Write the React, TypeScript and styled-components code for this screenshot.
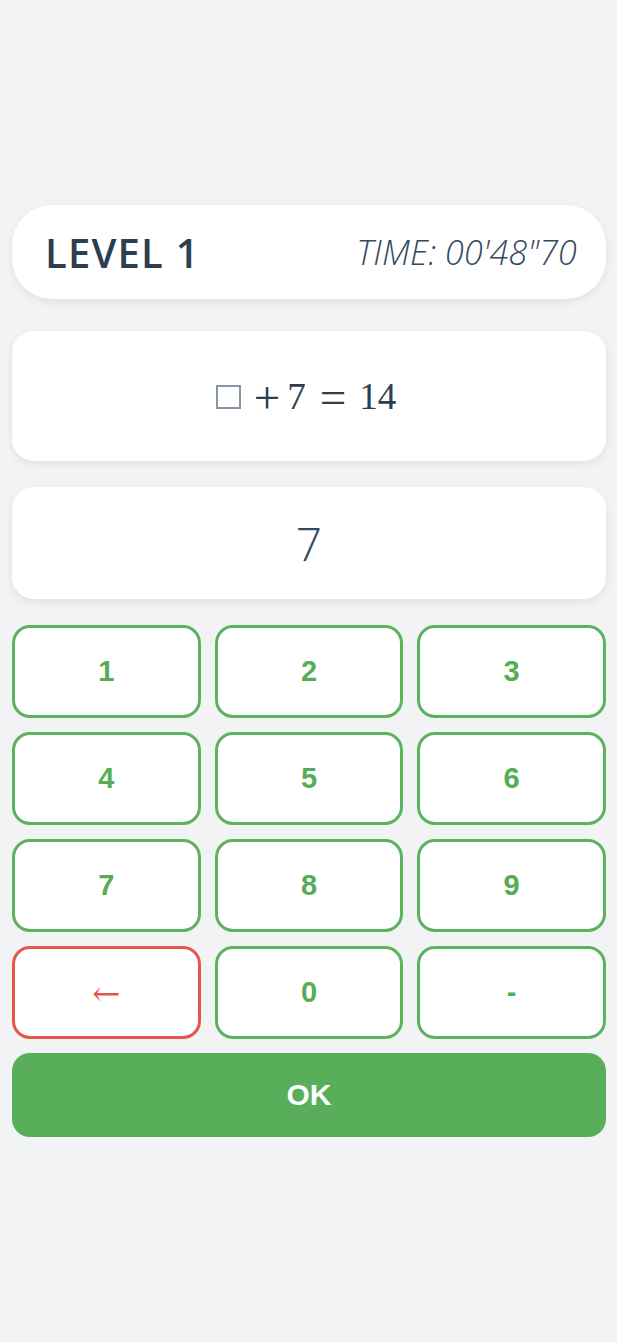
import React from "react";
import styled, { createGlobalStyle } from "styled-components";

const GlobalStyle = createGlobalStyle`
  html, body { margin: 0; padding: 0; background: #f2f3f5; }
  * { box-sizing: border-box; }
`;

const Page = styled.div`
  min-height: 1342px;
  display: flex;
  flex-direction: column;
  justify-content: center;
  padding: 0 11px 0 12px;
  background: #f2f3f5;
`;

const Header = styled.div`
  height: 94px;
  background: #fff;
  border-radius: 40px;
  box-shadow: 0 3px 8px rgba(0, 0, 0, 0.08);
  display: flex;
  align-items: center;
  justify-content: space-between;
  padding: 0 29px 0 33px;
  margin-bottom: 32px;
`;

const Level = styled.div`
  font-family: "Open Sans", sans-serif;
  font-weight: 600;
  font-size: 40px;
  letter-spacing: 1.2px;
  color: #2c3e50;
`;

const Time = styled.div`
  font-family: "Open Sans", sans-serif;
  font-style: italic;
  font-weight: 300;
  font-size: 34px;
  letter-spacing: 0.2px;
  color: #34495e;
`;

const Card = styled.div<{ $h: number; $mb: number }>`
  height: ${(p) => p.$h}px;
  margin-bottom: ${(p) => p.$mb}px;
  background: #fff;
  border-radius: 22px;
  box-shadow: 0 3px 8px rgba(0, 0, 0, 0.08);
  display: flex;
  align-items: center;
  justify-content: center;
`;

const Equation = styled.div`
  font-family: "Liberation Serif", serif;
  font-size: 37px;
  line-height: 1;
  color: #2c3e50;
  display: flex;
  align-items: center;
  padding-right: 6px;
`;

const Blank = styled.span`
  display: inline-block;
  width: 25px;
  height: 24px;
  border: 2px solid #8795a5;
  margin: 2px 13px 0 0;
`;

const Op = styled.span<{ $ml: number; $mr: number }>`
  font-size: 47px;
  line-height: 1;
  margin: 0 ${(p) => p.$mr}px 0 ${(p) => p.$ml}px;
  position: relative;
  top: 1px;
`;

const Answer = styled.div`
  font-family: "Open Sans", sans-serif;
  font-weight: 300;
  font-size: 46px;
  color: #34495e;
`;

const Keypad = styled.div`
  display: grid;
  grid-template-columns: repeat(3, 1fr);
  grid-auto-rows: 93px;
  column-gap: 14px;
  row-gap: 14px;
  margin-bottom: 14px;
`;

const Key = styled.button<{ $danger?: boolean }>`
  background: #fff;
  border: 3px solid ${(p) => (p.$danger ? "#e5574a" : "#5cb35c")};
  border-radius: 18px;
  color: ${(p) => (p.$danger ? "#e5574a" : "#55ad55")};
  font-family: "Liberation Sans", Arial, sans-serif;
  font-weight: 700;
  font-size: 29px;
  display: flex;
  align-items: center;
  justify-content: center;
  padding: 0;
`;

const Arrow = styled.span`
  font-family: "DejaVu Serif", "Liberation Serif", serif;
  font-weight: 400;
  font-size: 34px;
`;

const OkButton = styled.button`
  height: 84px;
  background: #59ae59;
  border: none;
  border-radius: 18px;
  color: #fff;
  font-family: "Liberation Sans", Arial, sans-serif;
  font-weight: 700;
  font-size: 30px;
`;

const keys = ["1", "2", "3", "4", "5", "6", "7", "8", "9"];

export default function App() {
  return (
    <>
      <GlobalStyle />
      <Page>
        <Header>
          <Level>LEVEL 1</Level>
          <Time>TIME: 00'48"70</Time>
        </Header>
        <Card $h={130} $mb={26}>
          <Equation>
            <Blank />
            <Op $ml={0} $mr={7}>+</Op>
            <span>7</span>
            <Op $ml={14} $mr={13}>=</Op>
            <span>14</span>
          </Equation>
        </Card>
        <Card $h={112} $mb={26}>
          <Answer>7</Answer>
        </Card>
        <Keypad>
          {keys.map((k) => (
            <Key key={k}>{k}</Key>
          ))}
          <Key $danger>
            <Arrow>←</Arrow>
          </Key>
          <Key>0</Key>
          <Key>-</Key>
        </Keypad>
        <OkButton>OK</OkButton>
      </Page>
    </>
  );
}
